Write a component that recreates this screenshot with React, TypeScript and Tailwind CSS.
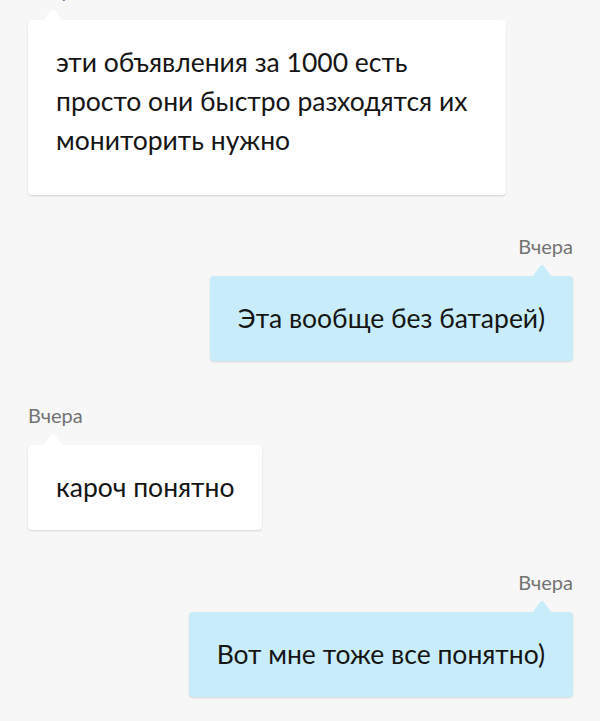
import React from 'react';

type Msg = { text: string; out: boolean; gapTop: number; pb?: number };

const messages: Msg[] = [
  { text: 'эти объявления за 1000 есть просто они быстро разходятся их мониторить нужно', out: false, gapTop: 0, pb: 35 },
  { text: 'Эта вообще без батарей)', out: true, gapTop: 39 },
  { text: 'кароч понятно', out: false, gapTop: 42 },
  { text: 'Вот мне тоже все понятно)', out: true, gapTop: 40 },
];

const Tail: React.FC<{ out: boolean }> = ({ out }) => (
  <svg
    width="20"
    height="13"
    viewBox="0 0 20 13"
    className={out ? 'absolute -top-[12px] right-[21px]' : 'absolute -top-[12px] left-[15px]'}
  >
    <path d="M0 13 L8.6 1.4 Q10 0 11.4 1.4 L20 13 Z" fill={out ? '#c9ecfb' : '#ffffff'} />
  </svg>
);

export default function App() {
  return (
    <div className="min-h-[721px] w-[600px] overflow-hidden bg-[#f7f7f7] font-['Lato','Noto_Sans',sans-serif]">
      <div className="-mt-[22px] flex flex-col pl-[28px] pr-[27px]">
        {messages.map((m, i) => (
          <div
            key={i}
            className={m.out ? 'flex flex-col items-end' : 'flex flex-col items-start'}
            style={{ marginTop: m.gapTop }}
          >
            <div className="text-[20px] leading-[24px] text-[#737373]">Вчера</div>
            <div
              className={
                (m.out ? 'bg-[#c9ecfb] ' : 'bg-white ') +
                'relative mt-[18px] max-w-[478px] rounded-[4px] px-[28px] pt-[23px] text-[26.5px] leading-[39px] text-[#151515] shadow-[0_1px_2px_rgba(0,0,0,0.14)]'
              }
              style={{ paddingBottom: m.pb ?? 23 }}
            >
              <Tail out={m.out} />
              {m.text}
            </div>
          </div>
        ))}
      </div>
    </div>
  );
}
